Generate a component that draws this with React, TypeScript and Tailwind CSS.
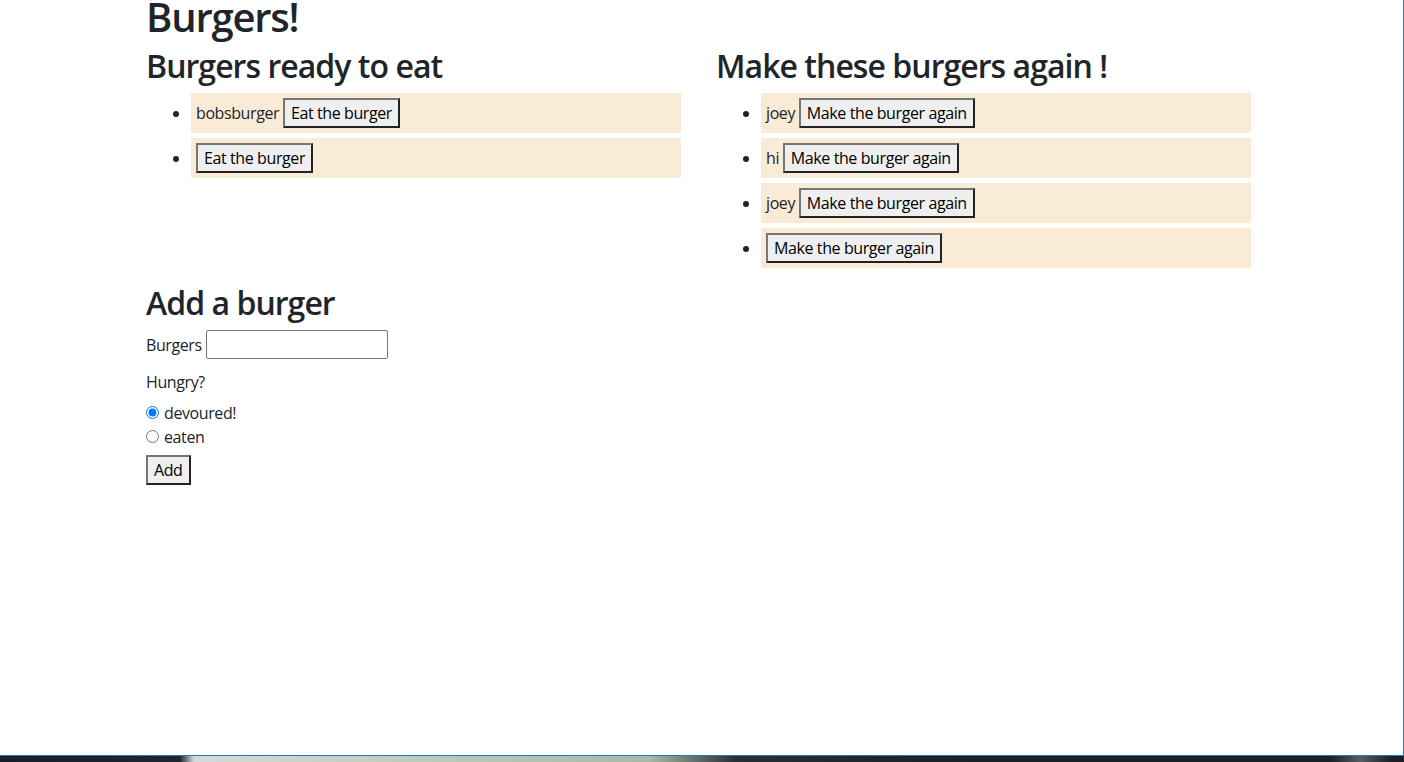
const readyBurgers = ['bobsburger', ''];
const eatenBurgers = ['joey', 'hi', 'joey', ''];

function BurgerButton({ label }: { label: string }) {
  return (
    <button
      type="button"
      className="inline-block align-baseline border-2 border-t-[#767676] border-l-[#767676] border-r-[#222] border-b-[#222] bg-[#efefef] px-[6px] py-[1px] leading-6 text-black"
    >
      {label}
    </button>
  );
}

function BurgerList({ names, action }: { names: string[]; action: string }) {
  return (
    <ul className="list-disc pl-[40px] mb-4">
      {names.map((name, i) => (
        <li key={i} className="m-[5px] p-[5px] bg-[#faebd7] leading-6">
          {name && <span>{name} </span>}
          <BurgerButton label={action} />
        </li>
      ))}
    </ul>
  );
}

export default function App() {
  return (
    <div className="w-[1404px] h-[762px] overflow-hidden flex flex-col font-['Open_Sans','Noto_Sans',sans-serif] text-[16px] tracking-[-0.025em] text-[#212529]">
      <div className="h-[756px] shrink-0 bg-white border-r border-b border-[#1a78d0] overflow-hidden">
        <div className="ml-[131px] w-[1140px] px-[15px] -mt-[9px]">
          <h1 className="text-[40px] leading-[48px] font-semibold tracking-[-0.03em] mt-[2px] mb-[6px]">Burgers!</h1>

          <div className="flex -mx-[15px]">
            <div className="w-1/2 px-[15px]">
              <h2 className="text-[32px] leading-[38.4px] font-semibold tracking-[-0.03em] mb-2">Burgers ready to eat</h2>
              <BurgerList names={readyBurgers} action="Eat the burger" />
            </div>
            <div className="w-1/2 px-[15px]">
              <h2 className="text-[32px] leading-[38.4px] font-semibold tracking-[-0.03em] mb-2">Make these burgers again !</h2>
              <BurgerList names={eatenBurgers} action="Make the burger again" />
            </div>
          </div>

          <h2 className="text-[32px] leading-[38.4px] font-semibold tracking-[-0.03em] mb-2">Add a burger</h2>
          <form className="flex flex-col items-start leading-6">
            <div className="flex items-center h-[30px] gap-[4px] -mt-[1px]">
              <label htmlFor="burger">Burgers</label>
              <input
                id="burger"
                type="text"
                className="w-[182px] h-[29px] border border-[#767676] rounded-[2px] bg-white px-[2px]"
              />
            </div>
            <p className="mt-[10px]">Hungry?</p>
            <label className="flex items-center mt-[7px]">
              <input type="radio" name="hungry" defaultChecked className="m-0 mr-[5px] w-[13px] h-[13px]" />
              devoured!
            </label>
            <label className="flex items-center">
              <input type="radio" name="hungry" className="m-0 mr-[5px] w-[13px] h-[13px]" />
              eaten
            </label>
            <div className="mt-[6px]">
              <BurgerButton label="Add" />
            </div>
          </form>
        </div>
      </div>
      <div className="h-[6px] shrink-0 bg-[linear-gradient(90deg,#1b1d24_0px,#22252b_180px,#d6dad6_194px,#c2cbc2_400px,#a9b8a8_650px,#2a2e30_735px,#1c1e22_1000px,#1c1e22_1330px,#5a5e60_1360px,#1c1e22_1392px)]" />
    </div>
  );
}
